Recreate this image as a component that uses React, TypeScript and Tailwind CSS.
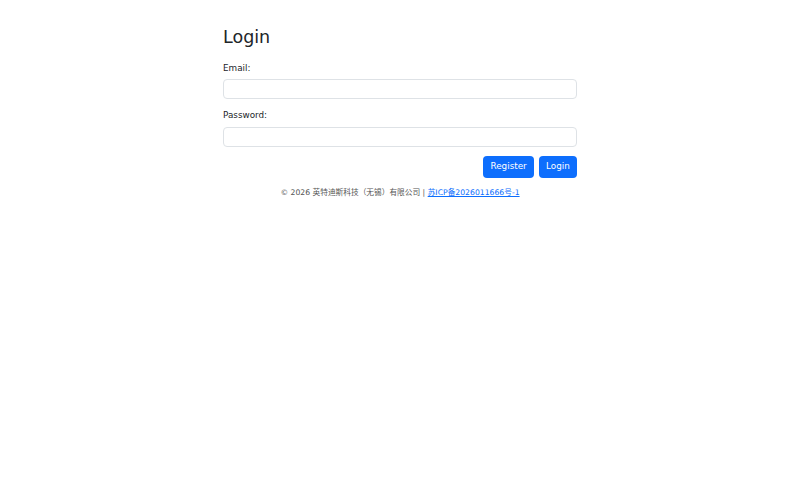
export default function App() {
  return (
    <div
      className="min-h-[500px] bg-white text-[#212529]"
      style={{ fontFamily: '"DejaVu Sans", "Noto Sans CJK SC", sans-serif' }}
    >
      <div className="mx-auto w-[354px] pt-[26.5px]">
        <h3 className="mb-[14.5px] text-[17.5px] leading-[21px] font-normal">Login</h3>
        <form className="flex flex-col">
          <label className="mb-[4px] text-[8.8px] leading-[13.2px]">Email:</label>
          <input
            type="email"
            className="mb-[9.8px] h-[20px] rounded-[4px] border border-[#dee2e6] px-2 text-[8.8px] outline-none"
          />
          <label className="mb-[5px] text-[8.8px] leading-[13.2px]">Password:</label>
          <input
            type="password"
            className="mb-[9px] h-[20px] rounded-[4px] border border-[#dee2e6] px-2 text-[8.8px] outline-none"
          />
          <div className="flex justify-end gap-[5px]">
            <button
              type="button"
              className="h-[21.3px] rounded-[4px] bg-[#0d6efd] px-[7.2px] text-[8.8px] text-white"
            >
              Register
            </button>
            <button
              type="button"
              className="h-[21.3px] rounded-[4px] bg-[#0d6efd] px-[7.2px] text-[8.8px] text-white"
            >
              Login
            </button>
          </div>
        </form>
        <p className="mt-[9.5px] text-center text-[7.7px] leading-[11.5px] text-[#555]">
          © 2026 英特迪斯科技（无锡）有限公司 |{' '}
          <a href="#" className="text-[#0d6efd] underline">
            苏ICP备2026011666号-1
          </a>
        </p>
      </div>
    </div>
  );
}
